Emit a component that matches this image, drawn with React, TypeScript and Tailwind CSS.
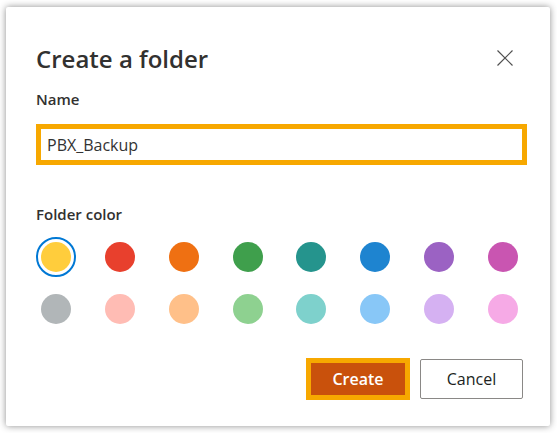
import React, { useState } from 'react'

const colors = [
  ['#ffcd3c', '#e8402d', '#ef7012', '#3f9f4c', '#25948d', '#1e84d0', '#9b62c3', '#c955b1'],
  ['#b1b6b8', '#ffbcb4', '#ffc089', '#8ed190', '#7ed1cc', '#88c7f7', '#d5b1f2', '#f6aae6'],
]

function Swatch({ color, selected, onClick }: { color: string; selected: boolean; onClick: () => void }) {
  return (
    <button
      onClick={onClick}
      className={
        selected
          ? 'w-[40px] h-[40px] rounded-full border-2 border-[#0078d4] flex items-center justify-center'
          : 'w-[40px] h-[40px] rounded-full border-2 border-transparent flex items-center justify-center'
      }
    >
      <span className="block w-[30px] h-[30px] rounded-full" style={{ backgroundColor: color }} />
    </button>
  )
}

export default function App() {
  const [name, setName] = useState('PBX_Backup')
  const [selected, setSelected] = useState('#ffcd3c')

  return (
    <div className="w-[557px] h-[433px] bg-white pl-[6px] pt-[7px] font-['Open_Sans',sans-serif] text-[#323130]">
      <div className="w-[544px] h-[419px] bg-white rounded-[2px] shadow-[0_0_7px_rgba(0,0,0,0.45)] px-[30px] pt-[33px]">
        <div className="flex items-center justify-between h-[36px]">
          <h1 className="text-[24px] font-semibold leading-[36px] mt-[2px]">Create a folder</h1>
          <button className="w-[32px] h-[32px] flex items-center justify-center mr-[-1px] text-[#505050]">
            <svg width="16" height="16" viewBox="0 0 16 16" fill="none" stroke="currentColor" strokeWidth="1.2">
              <path d="M0.5 0.5 L15.5 15.5 M15.5 0.5 L0.5 15.5" />
            </svg>
          </button>
        </div>

        <label className="block mt-[12px] text-[15px] font-semibold leading-[22px]">Name</label>
        <div className="mt-[14px] w-[491px] h-[41px] border-[5px] border-[#f7a800] bg-white flex items-center px-[6px]">
          <input
            value={name}
            onChange={(e) => setName(e.target.value)}
            className="w-full outline-none text-[16px] text-[#333] bg-transparent"
          />
        </div>

        <label className="block mt-[38px] text-[15px] font-semibold leading-[22px]">Folder color</label>
        <div className="mt-[12px] w-[487px] flex flex-col gap-[12px]">
          {colors.map((row, i) => (
            <div key={i} className="flex justify-between">
              {row.map((c) => (
                <Swatch key={c} color={c} selected={selected === c} onClick={() => setSelected(c)} />
              ))}
            </div>
          ))}
        </div>

        <div className="mt-[29px] w-[487px] flex justify-end items-center gap-[10px]">
          <div className="border-[5px] border-[#f7a800]">
            <button className="w-[94px] h-[32px] bg-[#c9510c] text-white text-[16px] font-semibold">Create</button>
          </div>
          <button className="w-[103px] h-[40px] border border-[#8a8886] rounded-[2px] bg-white text-[16px] text-[#201f1e]">
            Cancel
          </button>
        </div>
      </div>
    </div>
  )
}
